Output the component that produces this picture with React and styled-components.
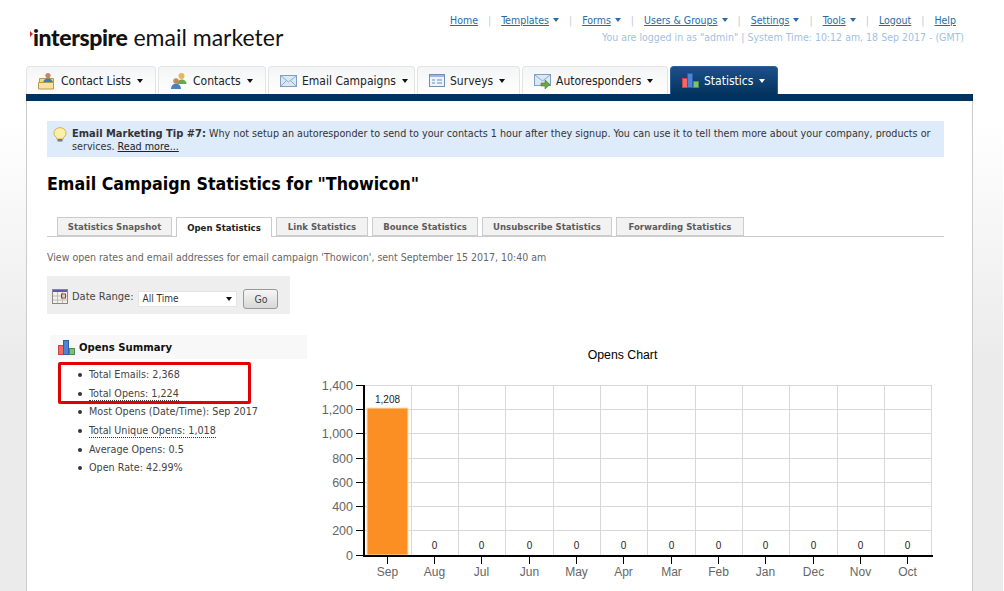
import React from 'react';
import styled, { createGlobalStyle } from 'styled-components';

const GlobalStyle = createGlobalStyle`
  html, body { margin: 0; padding: 0; background: #fff; }
  body {
    width: 1003px;
    height: 591px;
    overflow: hidden;
    font-family: "DejaVu Sans", Verdana, sans-serif;
    font-stretch: condensed;
    font-size: 10.5px;
    color: #4a4a4a;
    background: linear-gradient(#fff 0, #fff 120px, #ebebeb 360px);
  }
  * { box-sizing: border-box; }
`;

const Page = styled.div`
  width: 1003px;
  height: 591px;
  overflow: hidden;
  position: relative;
`;

const Header = styled.header`
  height: 66px;
  display: flex;
  justify-content: space-between;
  padding: 12px 39px 0 30px;
`;

const Logo = styled.div`
  display: flex;
  align-items: center;
  height: 28px;
  margin-top: 11px;
  font-family: "Lato", sans-serif;
  font-stretch: normal;
  font-size: 23px;
  line-height: 28px;
  color: #111;
  white-space: nowrap;
  b { font-weight: 900; letter-spacing: -0.4px; margin-right: 6px; }
`;

const HeaderRight = styled.div`
  display: flex;
  flex-direction: column;
  align-items: flex-end;
`;

const TopNav = styled.nav`
  display: flex;
  align-items: center;
  height: 15px;
  margin-right: 8px;
`;

const TopLink = styled.a`
  color: #2a6aa5;
  text-decoration: underline;
  white-space: nowrap;
`;

const Caret = styled.span`
  display: inline-block;
  width: 0;
  height: 0;
  margin-left: ${(p) => p.$gap ?? 4}px;
  vertical-align: middle;
  border-left: 3.5px solid transparent;
  border-right: 3.5px solid transparent;
  border-top: 4px solid ${(p) => p.$color || '#111'};
`;

const Sep = styled.span`
  color: #bcc8d4;
  margin: 0 10px;
`;

const Status = styled.div`
  margin-top: 4px;
  color: #a3bfdf;
  white-space: nowrap;
`;

const MainTabs = styled.div`
  display: flex;
  gap: 2px;
  height: 28px;
  margin-left: 26px;
`;

const MainTab = styled.div`
  display: flex;
  align-items: center;
  width: ${(p) => p.$w}px;
  height: 28px;
  padding-left: 11px;
  gap: 5px;
  font-size: 12px;
  white-space: nowrap;
  border: 1px solid ${(p) => (p.$active ? '#2d6099' : '#e4e4e4')};
  border-bottom: 0;
  border-radius: 4px 4px 0 0;
  color: ${(p) => (p.$active ? '#fff' : '#222')};
  background: ${(p) =>
    p.$active ? 'linear-gradient(#1c5189, #04335f)' : 'linear-gradient(#f4f5f6, #fff)'};
`;

const NavyBar = styled.div`
  height: 7px;
  width: 947px;
  margin-left: 26px;
  background: #04325f;
`;

const Panel = styled.main`
  width: 947px;
  height: 490px;
  margin-left: 26px;
  padding: 20px 28px 0 20px;
  background: #fff;
  border-left: 1px solid #ccc;
  border-right: 1px solid #ccc;
`;

const Tip = styled.div`
  display: flex;
  gap: 5px;
  height: 36px;
  padding: 6px 6px 0 6px;
  background: #deebfb;
  line-height: 13px;
  font-size: 10.7px;
  color: #333;
  b { color: #333; font-size: 11px; }
  a { color: #222; text-decoration: underline; }
`;

const Title = styled.h1`
  margin: 16px 0 0;
  font-size: 17.7px;
  line-height: 22px;
  font-weight: 700;
  color: #000;
  white-space: nowrap;
`;

const SubTabs = styled.div`
  display: flex;
  gap: 4px;
  height: 20px;
  margin-top: 22px;
  padding-left: 10px;
  border-bottom: 1px solid #ccc;
`;

const SubTab = styled.div`
  display: flex;
  align-items: center;
  justify-content: center;
  width: ${(p) => p.$w}px;
  height: ${(p) => (p.$active ? 20 : 19)}px;
  font-size: 9.5px;
  font-weight: 700;
  white-space: nowrap;
  border: 1px solid #ccc;
  border-bottom: ${(p) => (p.$active ? '0' : '1px solid #ccc')};
  color: ${(p) => (p.$active ? '#222' : '#5c5c5c')};
  background: ${(p) => (p.$active ? '#fff' : '#f2f2f2')};
`;

const Intro = styled.p`
  margin: 14px 0 0;
  line-height: 13px;
  color: #666;
  white-space: nowrap;
`;

const DateBox = styled.div`
  display: flex;
  align-items: center;
  width: 243px;
  height: 38px;
  margin-top: 12px;
  padding: 3px 0 0 5px;
  background: #eee;
  color: #444;
`;

const DateLabel = styled.span`
  margin-left: 4px;
  margin-right: 5px;
  font-size: 11px;
`;

const Select = styled.div`
  display: flex;
  align-items: center;
  justify-content: space-between;
  width: 99px;
  height: 16px;
  margin-top: 4px;
  padding: 0 4px 0 3px;
  font-size: 10px;
  background: #fff;
  border: 1px solid #e4e4e4;
  color: #333;
`;

const GoButton = styled.button`
  width: 35px;
  height: 20px;
  margin: 4px 0 0 6px;
  padding: 0;
  font: inherit;
  color: #444;
  border: 1px solid #999;
  border-radius: 3px;
  background: linear-gradient(#f6f6f6, #d8d8d8);
`;

const Columns = styled.div`
  display: flex;
  margin-top: 21px;
`;

const Summary = styled.section`
  width: 257px;
  margin-left: 3px;
  flex: none;
`;

const SummaryHead = styled.div`
  display: flex;
  align-items: center;
  gap: 4px;
  height: 24px;
  padding-left: 8px;
  font-weight: 700;
  font-size: 11.2px;
  color: #111;
  background: #f8f8f8;
`;

const List = styled.ul`
  margin: 7px 0 0;
  padding: 0 0 0 28px;
  list-style: none;
  li {
    height: 18.7px;
    line-height: 18.7px;
    font-size: 10.7px;
    color: #444;
    white-space: nowrap;
  }
  li::before {
    content: '';
    display: inline-block;
    width: 4px;
    height: 4px;
    margin-right: 7px;
    vertical-align: middle;
    border-radius: 50%;
    background: #333;
  }
`;

const Dotted = styled.span`
  border-bottom: 1px dotted #333;
`;

const Highlight = styled.div`
  position: absolute;
  left: 58px;
  top: 362px;
  width: 193px;
  height: 42px;
  border: 3px solid #e40000;
  border-radius: 2px;
`;

const ChartWrap = styled.div`
  margin-left: 3px;
  margin-top: 5px;
`;

const Icon = ({ children, size = 18 }) => (
  <svg width={size} height={size} viewBox="0 0 18 18" style={{ flex: 'none' }}>
    {children}
  </svg>
);

const ListIcon = () => (
  <Icon>
    <path d="M1.5 6.5h14v10h-14z" fill="#f6d77c" stroke="#b69a4c" />
    <circle cx="10" cy="3.5" r="2.6" fill="#c9875c" />
    <path d="M5 11 a5 4.6 0 0 1 10 0z" fill="#4a78b5" />
    <path d="M.5 10.5h15v6.5h-15z" fill="#f9e39c" stroke="#b69a4c" />
  </Icon>
);

const ContactsIcon = () => (
  <Icon>
    <circle cx="11.5" cy="4" r="3" fill="#e4b95a" />
    <path d="M7 12 a4.8 4.6 0 0 1 9.6 0z" fill="#6aa84f" />
    <circle cx="6" cy="9" r="2.8" fill="#c9875c" />
    <path d="M1 17 a5 5.5 0 0 1 10 0z" fill="#4a7fc0" />
  </Icon>
);

const MailIcon = () => (
  <svg width="17" height="12" viewBox="0 0 17 12" style={{ flex: 'none' }}>
    <rect x=".5" y=".5" width="16" height="11" fill="#d9e7f7" stroke="#7f9fc4" />
    <path d="M1 1l7.5 6L16 1M1 11l5.5-5.5M16 11l-5.5-5.5" fill="none" stroke="#8fabcb" />
  </svg>
);

const SurveyIcon = () => (
  <svg width="16" height="13" viewBox="0 0 16 13" style={{ flex: 'none' }}>
    <rect x=".5" y=".5" width="15" height="12" fill="#eef3fa" stroke="#6e8fb8" />
    <rect x="1" y="1" width="14" height="2" fill="#9db8d9" />
    <path d="M3 6h3M3 9h3M8 6h5M8 9h5" stroke="#6e8fb8" />
  </svg>
);

const AutoIcon = () => (
  <svg width="17" height="17" viewBox="0 0 17 17" style={{ flex: 'none' }}>
    <rect x=".5" y="2.5" width="16" height="11" fill="#d9e7f7" stroke="#7f9fc4" />
    <path d="M1 3l7.5 6L16 3" fill="none" stroke="#8fabcb" />
    <path d="M7 11h4V8l5 4.5L11 17v-3H7z" fill="#6aa83f" stroke="#47802a" strokeWidth=".6" />
  </svg>
);

const BarsIcon = () => (
  <svg width="17" height="15" viewBox="0 0 17 15" style={{ flex: 'none' }}>
    <rect x=".5" y="5.5" width="5" height="9" fill="#ef6a6a" stroke="#c44" />
    <rect x="5.5" y=".5" width="5" height="14" fill="#4a86d8" stroke="#2f5fa8" />
    <rect x="11.5" y="8.5" width="5" height="6" fill="#7cc07c" stroke="#4a8f4a" />
  </svg>
);

const BulbIcon = () => (
  <svg width="14" height="15" viewBox="0 0 14 15" style={{ flex: 'none' }}>
    <path d="M7 .5a6.3 5.6 0 0 1 3.4 10.2V12H3.6v-1.3A6.3 5.6 0 0 1 7 .5z" fill="#fdeea8" stroke="#d9b24a" />
    <rect x="4.5" y="12" width="5" height="2.5" fill="#777" />
  </svg>
);

const CalendarIcon = () => (
  <svg width="16" height="15" viewBox="0 0 16 15" style={{ flex: 'none' }}>
    <rect x=".5" y=".5" width="15" height="14" fill="#f4f1ea" stroke="#888" />
    <rect x="1" y="1" width="14" height="2" fill="#5a5aa8" />
    <path d="M5.5 3v11M10.5 3v11M1 7h14M1 11h14" stroke="#c2bcae" />
    <rect x="9.5" y="5" width="4" height="4" fill="none" stroke="#a33" />
  </svg>
);

const LogoMark = () => (
  <svg width="3" height="6" viewBox="0 0 3 6" style={{ flex: 'none', marginTop: -6 }}>
    <path d="M0 0l3 3-3 3z" fill="#d8262c" />
  </svg>
);

const topLinks = [
  { label: 'Home' },
  { label: 'Templates', menu: true },
  { label: 'Forms', menu: true },
  { label: 'Users & Groups', menu: true },
  { label: 'Settings', menu: true },
  { label: 'Tools', menu: true },
  { label: 'Logout' },
  { label: 'Help' },
];

const mainTabs = [
  { label: 'Contact Lists', w: 130, icon: <ListIcon /> },
  { label: 'Contacts', w: 108, icon: <ContactsIcon /> },
  { label: 'Email Campaigns', w: 147, icon: <MailIcon /> },
  { label: 'Surveys', w: 103, icon: <SurveyIcon /> },
  { label: 'Autoresponders', w: 146, icon: <AutoIcon /> },
  { label: 'Statistics', w: 108, icon: <BarsIcon />, active: true },
];

const subTabs = [
  { label: 'Statistics Snapshot', w: 115 },
  { label: 'Open Statistics', w: 96, active: true },
  { label: 'Link Statistics', w: 92 },
  { label: 'Bounce Statistics', w: 106 },
  { label: 'Unsubscribe Statistics', w: 130 },
  { label: 'Forwarding Statistics', w: 128 },
];

const months = ['Sep', 'Aug', 'Jul', 'Jun', 'May', 'Apr', 'Mar', 'Feb', 'Jan', 'Dec', 'Nov', 'Oct'];
const yTicks = [
  { label: '1,400', y: 385 },
  { label: '1,200', y: 409 },
  { label: '1,000', y: 433 },
  { label: '800', y: 458 },
  { label: '600', y: 482 },
  { label: '400', y: 506 },
  { label: '200', y: 530 },
  { label: '0', y: 555 },
];

// chart is drawn in page coords, shifted by the svg origin
const OX = 310;
const OY = 340;

const Chart = () => {
  const step = 47.33;
  const left = 364;
  return (
    <svg width="640" height="251" viewBox={`${OX} ${OY} 640 251`} style={{ display: 'block' }}>
      <text x="622.5" y="359" textAnchor="middle" fontFamily="Liberation Sans" fontSize="12.3" fill="#000">
        Opens Chart
      </text>
      {yTicks.map((t) => (
        <g key={t.label}>
          <line x1={left} x2="932" y1={t.y + 0.5} y2={t.y + 0.5} stroke="#d8d8d8" />
          <line x1="356" x2={left} y1={t.y + 0.5} y2={t.y + 0.5} stroke="#000" />
          <text x="353" y={t.y + 4.5} textAnchor="end" fontFamily="Liberation Sans" fontSize="12.5" fill="#666">
            {t.label}
          </text>
        </g>
      ))}
      {months.map((m, i) => {
        const gx = Math.floor(left - 0.3 + step * (i + 1)) + 0.5;
        const cx = Math.round(left + step * (i + 0.5)) - 0.5;
        return (
          <g key={m}>
            <line x1={gx} x2={gx} y1="385" y2="555" stroke="#d8d8d8" />
            <line x1={cx} x2={cx} y1="555" y2="564" stroke="#000" />
            <text x={cx} y="576" textAnchor="middle" fontFamily="Liberation Sans" fontSize="12" fill="#666">
              {m}
            </text>
            <text x={cx} y="549" textAnchor="middle" fontFamily="Liberation Sans" fontSize="10" fill="#222">
              {i === 0 ? '' : '0'}
            </text>
          </g>
        );
      })}
      <rect x="367" y="408" width="41" height="147" fill="#fb8f24" stroke="#fde0bc" />
      <text x="387.5" y="403" textAnchor="middle" fontFamily="Liberation Sans" fontSize="10" fill="#222">
        1,208
      </text>
      <rect x="363" y="385" width="2" height="172" fill="#000" />
      <rect x="363" y="555" width="570" height="2" fill="#000" />
    </svg>
  );
};

const App = () => (
  <Page>
    <GlobalStyle />
    <Header>
      <Logo>
        <LogoMark />
        <b>interspire</b> email marketer
      </Logo>
      <HeaderRight>
        <TopNav>
          {topLinks.map((l, i) => (
            <React.Fragment key={l.label}>
              {i > 0 && <Sep>|</Sep>}
              <TopLink>{l.label}</TopLink>
              {l.menu && <Caret $color="#2a6aa5" />}
            </React.Fragment>
          ))}
        </TopNav>
        <Status>You are logged in as "admin" | System Time: 10:12 am, 18 Sep 2017 - (GMT)</Status>
      </HeaderRight>
    </Header>
    <MainTabs>
      {mainTabs.map((t) => (
        <MainTab key={t.label} $w={t.w} $active={t.active}>
          {t.icon}
          <span>
            {t.label}
            <Caret $gap={6} $color={t.active ? '#fff' : '#111'} />
          </span>
        </MainTab>
      ))}
    </MainTabs>
    <NavyBar />
    <Panel>
      <Tip>
        <BulbIcon />
        <div>
          <b>Email Marketing Tip #7:</b> Why not setup an autoresponder to send to your contacts 1 hour
          after they signup. You can use it to tell them more about your company, products or services.{' '}
          <a>Read more...</a>
        </div>
      </Tip>
      <Title>Email Campaign Statistics for "Thowicon"</Title>
      <SubTabs>
        {subTabs.map((t) => (
          <SubTab key={t.label} $w={t.w} $active={t.active}>
            {t.label}
          </SubTab>
        ))}
      </SubTabs>
      <Intro>
        View open rates and email addresses for email campaign 'Thowicon', sent September 15 2017, 10:40 am
      </Intro>
      <DateBox>
        <CalendarIcon />
        <DateLabel>Date Range:</DateLabel>
        <Select>
          All Time
          <Caret $gap={0} $color="#111" />
        </Select>
        <GoButton>Go</GoButton>
      </DateBox>
      <Columns>
        <Summary>
          <SummaryHead>
            <BarsIcon />
            Opens Summary
          </SummaryHead>
          <List>
            <li>Total Emails: 2,368</li>
            <li>
              <Dotted>Total Opens: 1,224</Dotted>
            </li>
            <li>Most Opens (Date/Time): Sep 2017</li>
            <li>
              <Dotted>Total Unique Opens: 1,018</Dotted>
            </li>
            <li>Average Opens: 0.5</li>
            <li>Open Rate: 42.99%</li>
          </List>
        </Summary>
        <ChartWrap>
          <Chart />
        </ChartWrap>
      </Columns>
    </Panel>
    <Highlight />
  </Page>
);

export default App;
